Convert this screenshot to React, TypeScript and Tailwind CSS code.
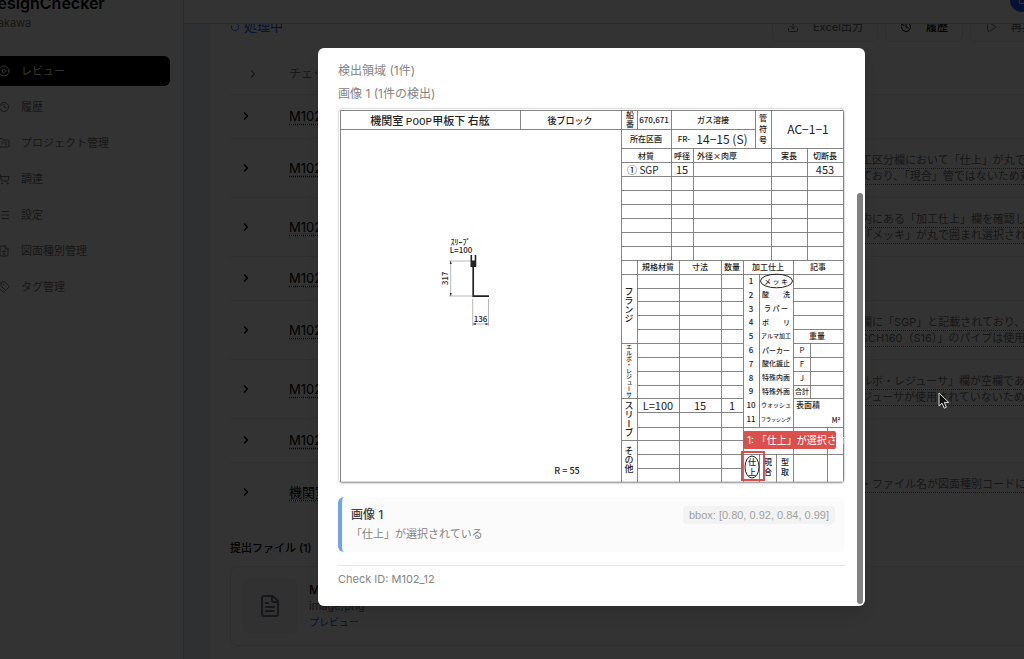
import type { ReactNode } from "react";
import {
  ChevronRight,
  CirclePlay,
  Download,
  FileText,
  FileType,
  FolderKanban,
  History,
  List,
  LoaderCircle,
  Play,
  ShoppingCart,
  Tags,
} from "lucide-react";
import { clsx } from "clsx";

const navItems = [
  { label: "レビュー", icon: CirclePlay, active: true },
  { label: "履歴", icon: History },
  { label: "プロジェクト管理", icon: FolderKanban },
  { label: "調達", icon: ShoppingCart },
  { label: "設定", icon: List },
  { label: "図面種別管理", icon: FileType },
  { label: "タグ管理", icon: Tags },
];

const checks = [
  { name: "M102_10", lines: [] },
  { name: "M102_12", lines: ["工区分欄において「仕上」が丸で囲まれ", "ており、「現合」管ではないため対象"] },
  { name: "M102_13", lines: ["内にある「加工仕上」欄を確認したとこ", "「メッキ」が丸で囲まれ選択されている"] },
  { name: "M102_14", lines: [] },
  { name: "M102_15", lines: ["欄に「SGP」と記載されており、「S", "SCH160（S16）」のパイプは使用され"] },
  { name: "M102_16", lines: ["ルボ・レジューサ」欄が空欄であり、エ", "ジューサが使用されていないため対象"] },
  { name: "M102_17", lines: [] },
  { name: "機関室配管", lines: ["・ファイル名が図面種別コードに一致", ""] },
];

function Sidebar() {
  return (
    <aside className="-ml-[27px] w-[211px] shrink-0 border-r border-gray-300 bg-white px-[13px]">
      <div className="h-[79px] pt-4">
        <p className="text-base leading-5 font-semibold text-black">DesignChecker</p>
        <p className="text-[11px] leading-5 text-neutral-500">Arakawa</p>
      </div>
      <nav className="flex flex-col gap-1.5">
        {navItems.map(({ label, icon: Icon, active }) => (
          <a
            key={label}
            href="#"
            className={clsx(
              "flex h-[30px] items-center gap-[11px] rounded-md px-3 text-[11px]",
              active ? "bg-black text-white" : "text-neutral-500"
            )}
          >
            <Icon className="size-3" />
            {label}
          </a>
        ))}
      </nav>
    </aside>
  );
}

function ToolbarButton({ icon, muted, children }: { icon: ReactNode; muted?: boolean; children: ReactNode }) {
  return (
    <button
      type="button"
      className={clsx(
        "flex h-[30px] items-center gap-3.5 rounded-md border border-gray-200 px-3.5 text-[11px] font-medium whitespace-nowrap",
        muted ? "text-neutral-500" : "text-black"
      )}
    >
      {icon}
      {children}
    </button>
  );
}

function CheckTable() {
  return (
    <table className="mt-3 w-full table-fixed text-left whitespace-nowrap">
      <thead>
        <tr className="h-10 border-b border-gray-200 text-xs text-neutral-500">
          <th className="w-[59px] pl-[17px] font-normal">
            <ChevronRight className="size-3" strokeWidth={2.5} />
          </th>
          <th className="w-[572px] font-normal">チェック項目</th>
          <th />
        </tr>
      </thead>
      <tbody>
        {checks.map((check, i) => (
          <tr
            key={check.name}
            className={clsx(
              check.lines.length ? "h-[59px]" : "h-11",
              i < checks.length - 1 && "border-b border-gray-200"
            )}
          >
            <td className="pl-2.5">
              <ChevronRight className="size-3 text-black" strokeWidth={3} />
            </td>
            <td className="text-[13px] leading-4 text-black underline decoration-dotted underline-offset-3">
              {check.name}
            </td>
            <td className="text-[11px] leading-4 text-neutral-500">
              {check.lines.map((line) => (
                <div key={line} className="min-h-4 underline decoration-dotted underline-offset-4">
                  {line}
                </div>
              ))}
            </td>
          </tr>
        ))}
      </tbody>
    </table>
  );
}

interface LabelProps {
  x: number;
  y: number;
  size?: number;
  vertical?: boolean;
  light?: boolean;
  children: ReactNode;
}

// y is the middle of the label
function Label({ x, y, size = 8, vertical, light, children }: LabelProps) {
  return (
    <text
      x={x}
      y={vertical ? y : y + size * 0.37}
      fontSize={size}
      textAnchor="middle"
      className={clsx(light ? "font-normal" : "font-medium", vertical && "[writing-mode:vertical-rl]")}
    >
      {children}
    </text>
  );
}

const finishes = [
  { text: "メ ッ キ", size: 7 },
  { text: "酸　　洗", size: 7 },
  { text: "ラ パ ー", size: 7 },
  { text: "ポ　　リ", size: 7 },
  { text: "アルマ加工", size: 6 },
  { text: "パーカー", size: 7 },
  { text: "酸化鍍止", size: 7 },
  { text: "特殊内面", size: 7 },
  { text: "特殊外面", size: 7 },
  { text: "ウォッシュ", size: 6 },
  { text: "フラッシング", size: 5 },
];

function PipeDrawing() {
  return (
    <svg
      viewBox="339 109 505 374"
      role="img"
      aria-label="配管図面"
      className="block w-full fill-[#222] font-['Noto_Sans_CJK_JP',sans-serif]"
    >
      <g fill="none" stroke="#777" strokeWidth="0.9">
        <path d="M340.5 110.5H843.5V482.2H340.5Z" />
        <path d="M340.5 129.5H755M520.5 110V129.5M621.5 110V482M637.5 110V129.5M671.5 110V260M755.5 110V148.5M771.5 110V260" />
        <path d="M693.5 148.5V260M807.5 148.5V260" />
        <path d="M621.5 148.5H843M621.5 162.5H843M621.5 176.5H843M621.5 190.5H843M621.5 204.5H843M621.5 218.5H843M621.5 232.5H843M621.5 246.5H843M621.5 260.5H843M621.5 274.5H843" />
        <path d="M637.5 260V482M679.5 260V482M721.5 260V482M743.5 260V482M793.5 260V482M759.5 274V427M759.5 454V482M776.5 454V482M810.5 343V398.5M827.5 427V482" />
        <path d="M637.5 288.5H743M637.5 301.5H743M637.5 315.5H743M637.5 329.5H743M621.5 343.5H743M637.5 357.5H743M637.5 371.5H743M637.5 385.5H743M621.5 398.5H743M637.5 412.5H743M637.5 427.5H843M621.5 440.5H743M637.5 454.5H843M637.5 468.5H743" />
        <path d="M793.5 288.5H843M793.5 301.5H843M793.5 315.5H843M793.5 329.5H843M793.5 343.5H843M793.5 357.5H843M793.5 371.5H843M793.5 385.5H843M793.5 398.5H843" />
      </g>

      <Label x={430} y={120.5} size={11}>
        機関室 <tspan className="font-['Liberation_Mono',monospace]" fontSize={11}>POOP</tspan>甲板下 右舷
      </Label>
      <Label x={570} y={120.5} size={9}>後ブロック</Label>
      <Label x={630} y={115.5}>船</Label>
      <Label x={630} y={124}>番</Label>
      <Label x={654} y={120}>670,671</Label>
      <Label x={713} y={120}>ガス溶接</Label>
      <Label x={763} y={118.5}>管</Label>
      <Label x={763} y={129.5}>符</Label>
      <Label x={763} y={140.5}>号</Label>
      <Label x={808} y={130} size={12} light>AC−1−1</Label>
      <Label x={646} y={139.5}>所在区画</Label>
      <Label x={684} y={139.5}>FR-</Label>
      <Label x={722} y={140} size={12} light>14−15 (S)</Label>
      <Label x={646} y={156}>材質</Label>
      <Label x={682} y={156}>呼径</Label>
      <Label x={717} y={156}>外径×肉厚</Label>
      <Label x={789} y={156}>実長</Label>
      <Label x={825} y={156}>切断長</Label>
      <Label x={632} y={170} size={10}>①</Label>
      <Label x={649} y={170} size={10} light>SGP</Label>
      <Label x={682} y={170} size={11} light>15</Label>
      <Label x={825} y={170} size={11} light>453</Label>

      <Label x={658} y={267}>規格材質</Label>
      <Label x={700} y={267}>寸法</Label>
      <Label x={732} y={267}>数量</Label>
      <Label x={768} y={267}>加工仕上</Label>
      <Label x={818} y={267}>記事</Label>
      {finishes.map((finish, i) => (
        <g key={finish.text}>
          <Label x={751} y={281 + i * 13.8}>{i + 1}</Label>
          <Label x={776} y={281 + i * 13.8} size={finish.size}>{finish.text}</Label>
        </g>
      ))}
      <ellipse cx="776.5" cy="281" rx="16" ry="6.8" fill="none" stroke="#222" />
      <Label x={817} y={336.5}>重量</Label>
      <Label x={802} y={350} light>P</Label>
      <Label x={802} y={364} light>F</Label>
      <Label x={802} y={378} light>J</Label>
      <Label x={802} y={391.5} size={7}>合計</Label>
      <Label x={808} y={405}>表面積</Label>
      <Label x={836} y={420} size={7}>M²</Label>
      <Label x={658} y={406} size={11} light>L=100</Label>
      <Label x={700} y={406} size={11} light>15</Label>
      <Label x={732} y={406} size={11} light>1</Label>
      <Label x={629} y={305} size={9} vertical>フランジ</Label>
      <Label x={629} y={371} size={6} vertical>エルボ・レジューサ</Label>
      <Label x={629} y={419} size={9} vertical>スリーブ</Label>
      <Label x={629} y={460} size={9} vertical>その他</Label>
      <Label x={752} y={462}>仕</Label>
      <Label x={752} y={472}>上</Label>
      <ellipse cx="752" cy="467" rx="7" ry="11" fill="none" stroke="#222" />
      <Label x={768} y={462}>現</Label>
      <Label x={768} y={472}>合</Label>
      <Label x={785} y={462}>型</Label>
      <Label x={785} y={472}>取</Label>
      <Label x={567} y={470.5} size={9}>R = 55</Label>

      {/* pipe with its sleeve and dimensions */}
      <g fill="none" stroke="#999" strokeWidth="0.7">
        <path d="M450.7 261V296M449 261H471M449 296H472M472.7 299V326M488.5 299V326M472.7 324H488.5" />
      </g>
      <path d="M449.7 264l1-3 1 3zM449.7 293l1 3 1-3zM475.7 323l-3 1 3 1zM485.5 323l3 1-3 1z" />
      <path d="M473.2 266V296.2H489" fill="none" stroke="#222" strokeWidth="1.7" />
      <path d="M470.5 255v12h5.8V255h-1.6v5.5h-2.6V255z" />
      <Label x={460.5} y={242.5}>ｽﾘｰﾌﾟ</Label>
      <Label x={461} y={250.5}>L=100</Label>
      <g transform="rotate(-90 445.5 278.5)">
        <Label x={445.5} y={278.5}>317</Label>
      </g>
      <Label x={480.5} y={319}>136</Label>
    </svg>
  );
}

function DetectionDialog() {
  return (
    <div
      role="dialog"
      aria-label="検出領域"
      className="relative w-[547px] rounded-md bg-white px-5 pt-3.5 pb-[18px] text-[11px] leading-[18px] text-[#858585] shadow-lg"
    >
      <h2 className="text-xs leading-[18px]">検出領域 (1件)</h2>
      <h3 className="mt-[5px] text-xs leading-[18px]">画像 1 (1件の検出)</h3>

      <div className="relative mx-px mt-1.5 overflow-hidden rounded-sm shadow-[0_0_2px_#888]">
        <PipeDrawing />
        <div className="absolute top-[92%] left-[80%] h-[7%] w-[4%] outline-2 outline-[#d9504d]" />
        <div className="absolute bottom-[9%] left-[80%] w-[93px] rounded-xs bg-[#d9504d] px-1 text-[10px] whitespace-nowrap text-white">
          1: 「仕上」が選択されている
        </div>
      </div>

      <div className="mt-3.5 flex items-start justify-between rounded-md border-l-4 border-[#6ea3ee] bg-[#fbfbfb] py-[9px] pr-2.5 pl-[9px]">
        <div>
          <p className="text-xs leading-[18px] font-medium text-neutral-700">画像 1</p>
          <p className="mt-px">「仕上」が選択されている</p>
        </div>
        <span className="rounded-sm bg-[#f3f3f3] px-1.5 font-['Liberation_Sans',sans-serif] text-neutral-400">
          bbox: [0.80, 0.92, 0.84, 0.99]
        </span>
      </div>

      <p className="mt-[13px] border-t border-neutral-200 pt-1">Check ID: M102_12</p>

      <div className="absolute right-0.5 bottom-0.5 h-[411px] w-1.5 rounded-full bg-[#808080]" />
    </div>
  );
}

export default function App() {
  return (
    <div className="relative h-screen overflow-hidden bg-white font-[Inter,'Noto_Sans_CJK_JP',sans-serif]">
      <div className="-mt-[23px] flex min-h-[calc(100%+23px)]">
        <Sidebar />
        <div className="flex min-w-0 flex-1 flex-col">
          <header className="flex h-[47px] shrink-0 items-center justify-end border-b border-gray-300 bg-white">
            <div className="-mr-2.5 flex size-6 items-center justify-center rounded-full bg-blue-600 text-[11px] text-white">
              D
            </div>
          </header>

          <main className="flex-1 overflow-hidden bg-[#e9eff8] pl-[26px]">
            <section className="-mt-3 -mr-[55px] h-full min-h-[660px] bg-white px-5">
              <div className="flex items-center justify-between">
                <p className="flex items-center gap-1 text-[13px] text-blue-600">
                  <LoaderCircle className="size-2.5 -rotate-90" />
                  処理中
                </p>
                <div className="flex gap-[7px]">
                  <ToolbarButton muted icon={<Download className="size-3" />}>Excel出力</ToolbarButton>
                  <ToolbarButton icon={<History className="size-3" />}>履歴</ToolbarButton>
                  <ToolbarButton muted icon={<Play className="size-3" />}>再実行</ToolbarButton>
                </div>
              </div>

              <CheckTable />

              <h2 className="mt-[18px] text-[11px] leading-[18px] font-medium text-black">提出ファイル (1)</h2>
              <div className="mt-[9px] flex items-center gap-3 rounded-lg border border-gray-200 p-3">
                <div className="flex size-[54px] items-center justify-center rounded-sm bg-neutral-100">
                  <FileText className="size-6 text-gray-500" />
                </div>
                <div className="text-[11px] leading-4 text-neutral-500">
                  <p className="text-xs font-medium text-black">M102.png</p>
                  <p>image/png</p>
                  <a href="#" className="text-[10px] text-blue-600">プレビュー</a>
                </div>
              </div>
            </section>
          </main>
        </div>
      </div>

      <div className="absolute inset-0 flex items-start justify-center bg-black/80 pt-12 pl-[159px]">
        <DetectionDialog />
      </div>

      <svg viewBox="0 0 12 18" className="absolute top-[392px] left-[938px] w-3">
        <path d="M1 1v13l3-2.8 2.2 5 2.2-1-2.1-4.8h4.4z" fill="#111" stroke="#ddd" />
      </svg>
    </div>
  );
}
